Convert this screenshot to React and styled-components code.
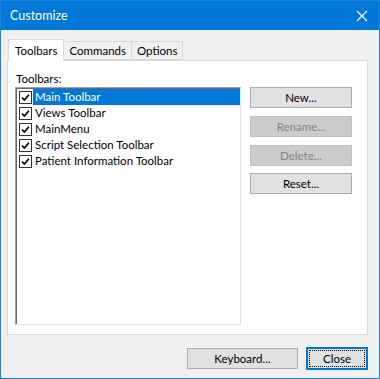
import React from "react";
import styled, { createGlobalStyle } from "styled-components";

const Global = createGlobalStyle`
  html, body {
    margin: 0;
    padding: 0;
    background: #ffffff;
  }
  * {
    box-sizing: border-box;
  }
`;

const Window = styled.div`
  width: 380px;
  height: 379px;
  border: 1px solid #1883d7;
  background: #f0f0f0;
  display: flex;
  flex-direction: column;
  font-family: Lato, "Noto Sans", sans-serif;
  font-size: 11.5px;
  color: #000;
`;

const TitleBar = styled.div`
  height: 29px;
  background: #0078d7;
  color: #fff;
  display: flex;
  align-items: center;
  justify-content: space-between;
  padding: 0 8px 0 9px;
  font-size: 12.5px;
`;

const CloseX = styled.svg`
  width: 12px;
  height: 12px;
  margin-right: 3px;
`;

const Body = styled.div`
  flex: 1;
  display: flex;
  flex-direction: column;
  padding: 9px 11px 0 6px;
`;

const TabStrip = styled.div`
  display: flex;
  align-items: flex-end;
  height: 21px;
  padding-left: 1px;
  position: relative;
  z-index: 1;
`;

const Tab = styled.div`
  height: ${(p) => (p.$active ? "22px" : "19px")};
  margin-bottom: ${(p) => (p.$active ? "-1px" : "0")};
  padding: 0 ${(p) => (p.$active ? "6px" : "5px")};
  border: 1px solid #d9d9d9;
  border-bottom: ${(p) => (p.$active ? "none" : "1px solid #d9d9d9")};
  border-left: ${(p) => (p.$first || p.$active ? "1px solid #d9d9d9" : "none")};
  background: ${(p) => (p.$active ? "#ffffff" : "#f0f0f0")};
  display: flex;
  align-items: center;
  white-space: nowrap;
`;

const Panel = styled.div`
  width: 361px;
  height: 275px;
  background: #fff;
  border: 1px solid #d9d9d9;
  display: flex;
  padding: 10px 0 0 7px;
  gap: 9px;
`;

const LeftCol = styled.div`
  display: flex;
  flex-direction: column;
`;

const Label = styled.div`
  height: 16px;
  line-height: 16px;
  margin-left: 1px;
`;

const ListBox = styled.div`
  width: 226px;
  height: 238px;
  border-top: 1px solid #a0a0a0;
  border-left: 1px solid #a0a0a0;
  border-right: 1px solid #e3e3e3;
  border-bottom: 1px solid #e3e3e3;
  padding: 1px 0 0 2px;
  display: flex;
  flex-direction: column;
  box-shadow: inset 1px 1px 0 #696969;
`;

const Row = styled.div`
  height: 16px;
  display: flex;
  align-items: center;
`;

const Check = styled.svg`
  width: 13px;
  height: 13px;
  margin-left: 1px;
  flex: none;
`;

const ItemText = styled.div`
  flex: 1;
  height: 16px;
  line-height: 16px;
  margin-left: 1px;
  padding-left: 2px;
  background: ${(p) => (p.$selected ? "#0078d7" : "transparent")};
  color: ${(p) => (p.$selected ? "#fff" : "#000")};
  white-space: nowrap;
`;

const RightCol = styled.div`
  display: flex;
  flex-direction: column;
  padding-top: 16px;
`;

const Button = styled.div`
  width: ${(p) => p.$w || "102px"};
  height: ${(p) => p.$h || "21px"};
  margin-bottom: ${(p) => p.$mb || "0"};
  background: ${(p) => (p.$disabled ? "#cccccc" : "#e1e1e1")};
  border: 1px solid ${(p) => (p.$disabled ? "#bfbfbf" : "#adadad")};
  color: ${(p) => (p.$disabled ? "#838383" : "#000")};
  display: flex;
  align-items: center;
  justify-content: center;
`;

const DefaultButton = styled.div`
  width: 62px;
  height: 23px;
  border: 2px solid #0078d7;
  background: #e1e1e1;
  padding: 1px;
  display: flex;
`;

const FocusRect = styled.div`
  flex: 1;
  border: 1px dotted #000;
  display: flex;
  align-items: center;
  justify-content: center;
`;

const Footer = styled.div`
  display: flex;
  justify-content: flex-end;
  align-items: center;
  gap: 8px;
  padding-top: 12px;
`;

const CheckBox = () => (
  <Check viewBox="0 0 13 13">
    <rect x="0.5" y="0.5" width="12" height="12" fill="#fff" stroke="#333" />
    <path d="M3 6.5 L5.3 9 L10 3.8" fill="none" stroke="#000" strokeWidth="1.7" />
  </Check>
);

const items = [
  "Main Toolbar",
  "Views Toolbar",
  "MainMenu",
  "Script Selection Toolbar",
  "Patient Information Toolbar",
];

export default function App() {
  return (
    <>
      <Global />
      <Window>
        <TitleBar>
          <span>Customize</span>
          <CloseX viewBox="0 0 12 12">
            <path d="M1 1 L11 11 M11 1 L1 11" stroke="#fff" strokeWidth="1.1" />
          </CloseX>
        </TitleBar>
        <Body>
          <TabStrip>
            <Tab $active $first>Toolbars</Tab>
            <Tab>Commands</Tab>
            <Tab>Options</Tab>
          </TabStrip>
          <Panel>
            <LeftCol>
              <Label>Toolbars:</Label>
              <ListBox>
                {items.map((name, i) => (
                  <Row key={name}>
                    <CheckBox />
                    <ItemText $selected={i === 0}>{name}</ItemText>
                  </Row>
                ))}
              </ListBox>
            </LeftCol>
            <RightCol>
              <Button $mb="8px">New...</Button>
              <Button $disabled $mb="8px">Rename...</Button>
              <Button $disabled $mb="7px">Delete...</Button>
              <Button>Reset...</Button>
            </RightCol>
          </Panel>
          <Footer>
            <Button $w="111px">Keyboard...</Button>
            <DefaultButton>
              <FocusRect>Close</FocusRect>
            </DefaultButton>
          </Footer>
        </Body>
      </Window>
    </>
  );
}
